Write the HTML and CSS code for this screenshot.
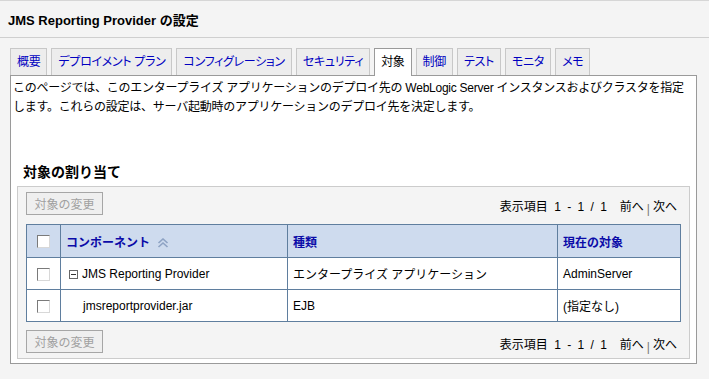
FILE: index.html
```html
<!DOCTYPE html>
<html lang="ja">

<head>
    <meta charset="UTF-8">
    <title>JMS Reporting Provider の設定</title>
    <link rel="stylesheet" href="styles.css">
</head>

<body>
    <div class="titlebar">
        <h1>JMS Reporting Provider の設定</h1>
    </div>

    <div class="tabs">
        <a class="tab" href="#">概要</a>
        <a class="tab" href="#">デプロイメント プラン</a>
        <a class="tab" href="#">コンフィグレーション</a>
        <a class="tab" href="#">セキュリティ</a>
        <span class="tab active">対象</span>
        <a class="tab" href="#">制御</a>
        <a class="tab" href="#">テスト</a>
        <a class="tab" href="#">モニタ</a>
        <a class="tab" href="#">メモ</a>
    </div>

    <div class="panel">
        <p class="intro">このページでは、このエンタープライズ アプリケーションのデプロイ先の WebLogic Server インスタンスおよびクラスタを指定します。これらの設定は、サーバ起動時のアプリケーションのデプロイ先を決定します。</p>

        <h2 class="section-title">対象の割り当て</h2>

        <div class="table-box">
            <div class="table-bar">
                <button disabled>対象の変更</button>
                <div class="pager">表示項目 1 - 1 / 1<span class="nav">前へ</span><span class="sep">|</span><span>次へ</span></div>
            </div>

            <table class="targets">
                <colgroup>
                    <col style="width: 34px">
                    <col style="width: 227px">
                    <col style="width: 270px">
                    <col>
                </colgroup>
                <tr>
                    <th class="check"><span class="cb"></span></th>
                    <th>
                        <a href="#">コンポーネント</a>
                        <svg class="sort" width="12" height="10" viewBox="0 0 12 10">
                            <path d="M1.5 5 L6 1 L10.5 5" fill="none" stroke="#8ea3c4" stroke-width="1.6" />
                            <path d="M1.5 9 L6 5 L10.5 9" fill="none" stroke="#8ea3c4" stroke-width="1.6" />
                        </svg>
                    </th>
                    <th><a href="#">種類</a></th>
                    <th><a href="#">現在の対象</a></th>
                </tr>
                <tr>
                    <td class="check"><span class="cb"></span></td>
                    <td class="app">
                        <svg class="tree" width="9" height="9" viewBox="0 0 9 9">
                            <rect x="0.5" y="0.5" width="8" height="8" fill="#fff" stroke="#666" />
                            <path d="M2 4.5 H7" stroke="#333" />
                        </svg>JMS Reporting Provider
                    </td>
                    <td>エンタープライズ アプリケーション</td>
                    <td>AdminServer</td>
                </tr>
                <tr>
                    <td class="check"><span class="cb"></span></td>
                    <td class="module">jmsreportprovider.jar</td>
                    <td>EJB</td>
                    <td>(指定なし)</td>
                </tr>
            </table>

            <div class="table-bar">
                <button disabled>対象の変更</button>
                <div class="pager">表示項目 1 - 1 / 1<span class="nav">前へ</span><span class="sep">|</span><span>次へ</span></div>
            </div>
        </div>
    </div>
</body>

</html>
```

FILE: styles.css
```css
body {
    margin: 0;
    background: #f4f4f4;
    font-family: "Liberation Sans", "Noto Sans CJK JP", sans-serif;
    font-size: 12px;
    color: #000;
}

.titlebar {
    height: 36px;
    padding-left: 8px;
    border-top: 1px solid #d6d6d6;
    border-bottom: 1px solid #cfcfcf;
    display: flex;
    align-items: center;
}

.titlebar h1 {
    margin: 0;
    font-size: 13px;
    font-weight: bold;
}

.tabs {
    display: flex;
    gap: 4px;
    padding: 10px 0 0 10px;
}

.tab {
    height: 26px;
    line-height: 26px;
    padding: 0 6px;
    border: 1px solid #c8c8c8;
    border-bottom: none;
    background: #ededed;
    color: #0000c0;
    text-decoration: none;
    font-feature-settings: "palt";
    letter-spacing: -0.3px;
}

.tab.active {
    position: relative;
    height: 27px;
    margin-bottom: -1px;
    background: #fff;
    color: #000;
    border-color: #9a9a9a;
}

.panel {
    margin: 0 12px 0 10px;
    padding: 3px 0 4px;
    background: #fff;
    border: 1px solid #9a9a9a;
}

.intro {
    margin: 0;
    padding: 0 2px;
    line-height: 19px;
    letter-spacing: -0.25px;
}

.section-title {
    margin: 46px 0 4px;
    padding-left: 12px;
    font-size: 14px;
    line-height: 19px;
}

.table-box {
    margin: 0 6px;
    padding: 5px 8px;
    background: #f4f4f4;
    border: 1px solid #cccccc;
}

.table-bar {
    display: flex;
    justify-content: space-between;
    align-items: flex-end;
}

.table-bar button {
    width: 77px;
    height: 23px;
    padding: 0;
    font: inherit;
    color: #a0a0a0;
    background: #efefef;
    border: 1px solid #a6a6a6;
}

.pager {
    padding-right: 4px;
    line-height: 16px;
    word-spacing: 3px;
}

.pager .nav {
    margin-left: 13px;
}

.pager .sep {
    margin: 0 3px;
    color: #777;
    position: relative;
    top: 2px;
}

.targets {
    width: 100%;
    margin: 9px 0 8px;
    border-collapse: collapse;
    background: #fff;
}

.targets th,
.targets td {
    border: 1px solid #5f7e9e;
    padding: 0 5px;
    text-align: left;
}

.targets th {
    height: 32px;
    background: #cedbee;
}

.targets th a {
    color: #0b0ba8;
    text-decoration: none;
    font-weight: bold;
}

.targets td {
    height: 31px;
}

.targets .check {
    padding: 0;
    text-align: center;
}

.cb {
    display: inline-block;
    width: 11px;
    height: 11px;
    vertical-align: middle;
    background: #fff;
    border: 1px solid;
    border-color: #7a7a7a #d8d8d8 #d8d8d8 #7a7a7a;
}

.sort {
    margin-left: 4px;
    vertical-align: -1px;
}

.app {
    padding-left: 8px !important;
}

.tree {
    margin-right: 4px;
    vertical-align: -1px;
}

.module {
    padding-left: 22px !important;
}
```
